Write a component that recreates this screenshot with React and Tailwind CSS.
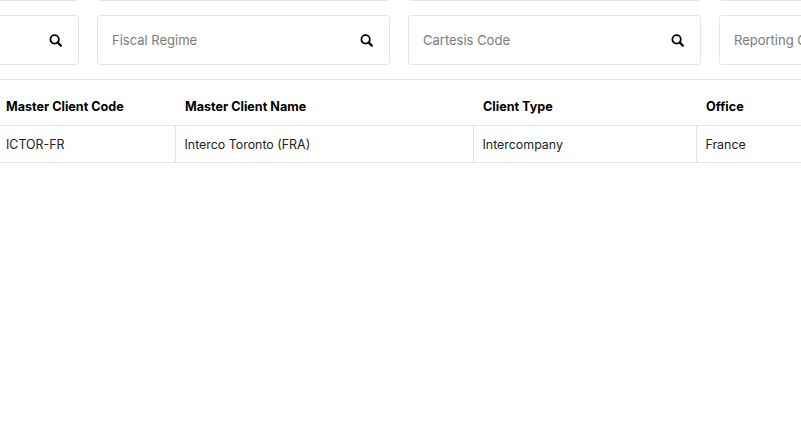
const FILTERS = ["Client Name", "Fiscal Regime", "Cartesis Code", "Reporting Code"];
const COLUMNS = [
  { label: "Master Client Code", value: "ICTOR-FR", width: "w-[175px]" },
  { label: "Master Client Name", value: "Interco Toronto (FRA)", width: "w-[298px]" },
  { label: "Client Type", value: "Intercompany", width: "w-[223px]" },
  { label: "Office", value: "France", width: "w-[300px]" },
];

function SearchIcon() {
  return (
    <svg width="13" height="13" viewBox="0 0 13 13" fill="none" stroke="black" className="shrink-0">
      <circle cx="5.6" cy="5.4" r="4.2" strokeWidth="1.8" />
      <path d="M8.6 8.4L11.8 11.6" strokeWidth="2.2" strokeLinecap="round" />
    </svg>
  );
}

function FilterBox({ label }) {
  return (
    <div className="flex h-[50px] w-[293px] shrink-0 items-center justify-between rounded-[3px] border border-[#e4e7ea] bg-white pl-[14px] pr-[16px]">
      <span className="whitespace-nowrap pt-[2px] text-[13px] text-[#7b7b7b]">{label}</span>
      <SearchIcon />
    </div>
  );
}

export default function App() {
  return (
    <div className="h-[447px] w-[801px] overflow-hidden bg-white font-['Inter',sans-serif] text-black">
      <div className="ml-[-214px] mt-[-49px] flex gap-[18px]">
        {FILTERS.map((name) => (
          <div key={name} className="h-[50px] w-[293px] shrink-0 rounded-[3px] border border-[#e4e7ea]" />
        ))}
      </div>
      <div className="ml-[-214px] mt-[14px] flex gap-[18px]">
        {FILTERS.map((name) => (
          <FilterBox key={name} label={name} />
        ))}
      </div>
      <table className="mt-[14px] w-[996px] table-fixed border-collapse border-t border-[#e4e7ea]">
        <thead>
          <tr className="h-[46px] border-b border-[#e4e7ea]">
            {COLUMNS.map((col, i) => (
              <th key={col.label} className={`${col.width} ${i === 0 ? "pl-[6px]" : "pl-[10px]"} pt-[9px] text-left text-[12.6px] font-bold`}>
                {col.label}
              </th>
            ))}
          </tr>
        </thead>
        <tbody>
          <tr className="h-[37px] border-b border-[#e4e7ea]">
            {COLUMNS.map((col, i) => (
              <td key={col.label} className={`${i === 0 ? "pl-[6px]" : "border-l border-[#e4e7ea] pl-[9px]"} pt-[2px] text-[12.4px] font-normal text-[#222]`}>
                {col.value}
              </td>
            ))}
          </tr>
        </tbody>
      </table>
    </div>
  );
}
